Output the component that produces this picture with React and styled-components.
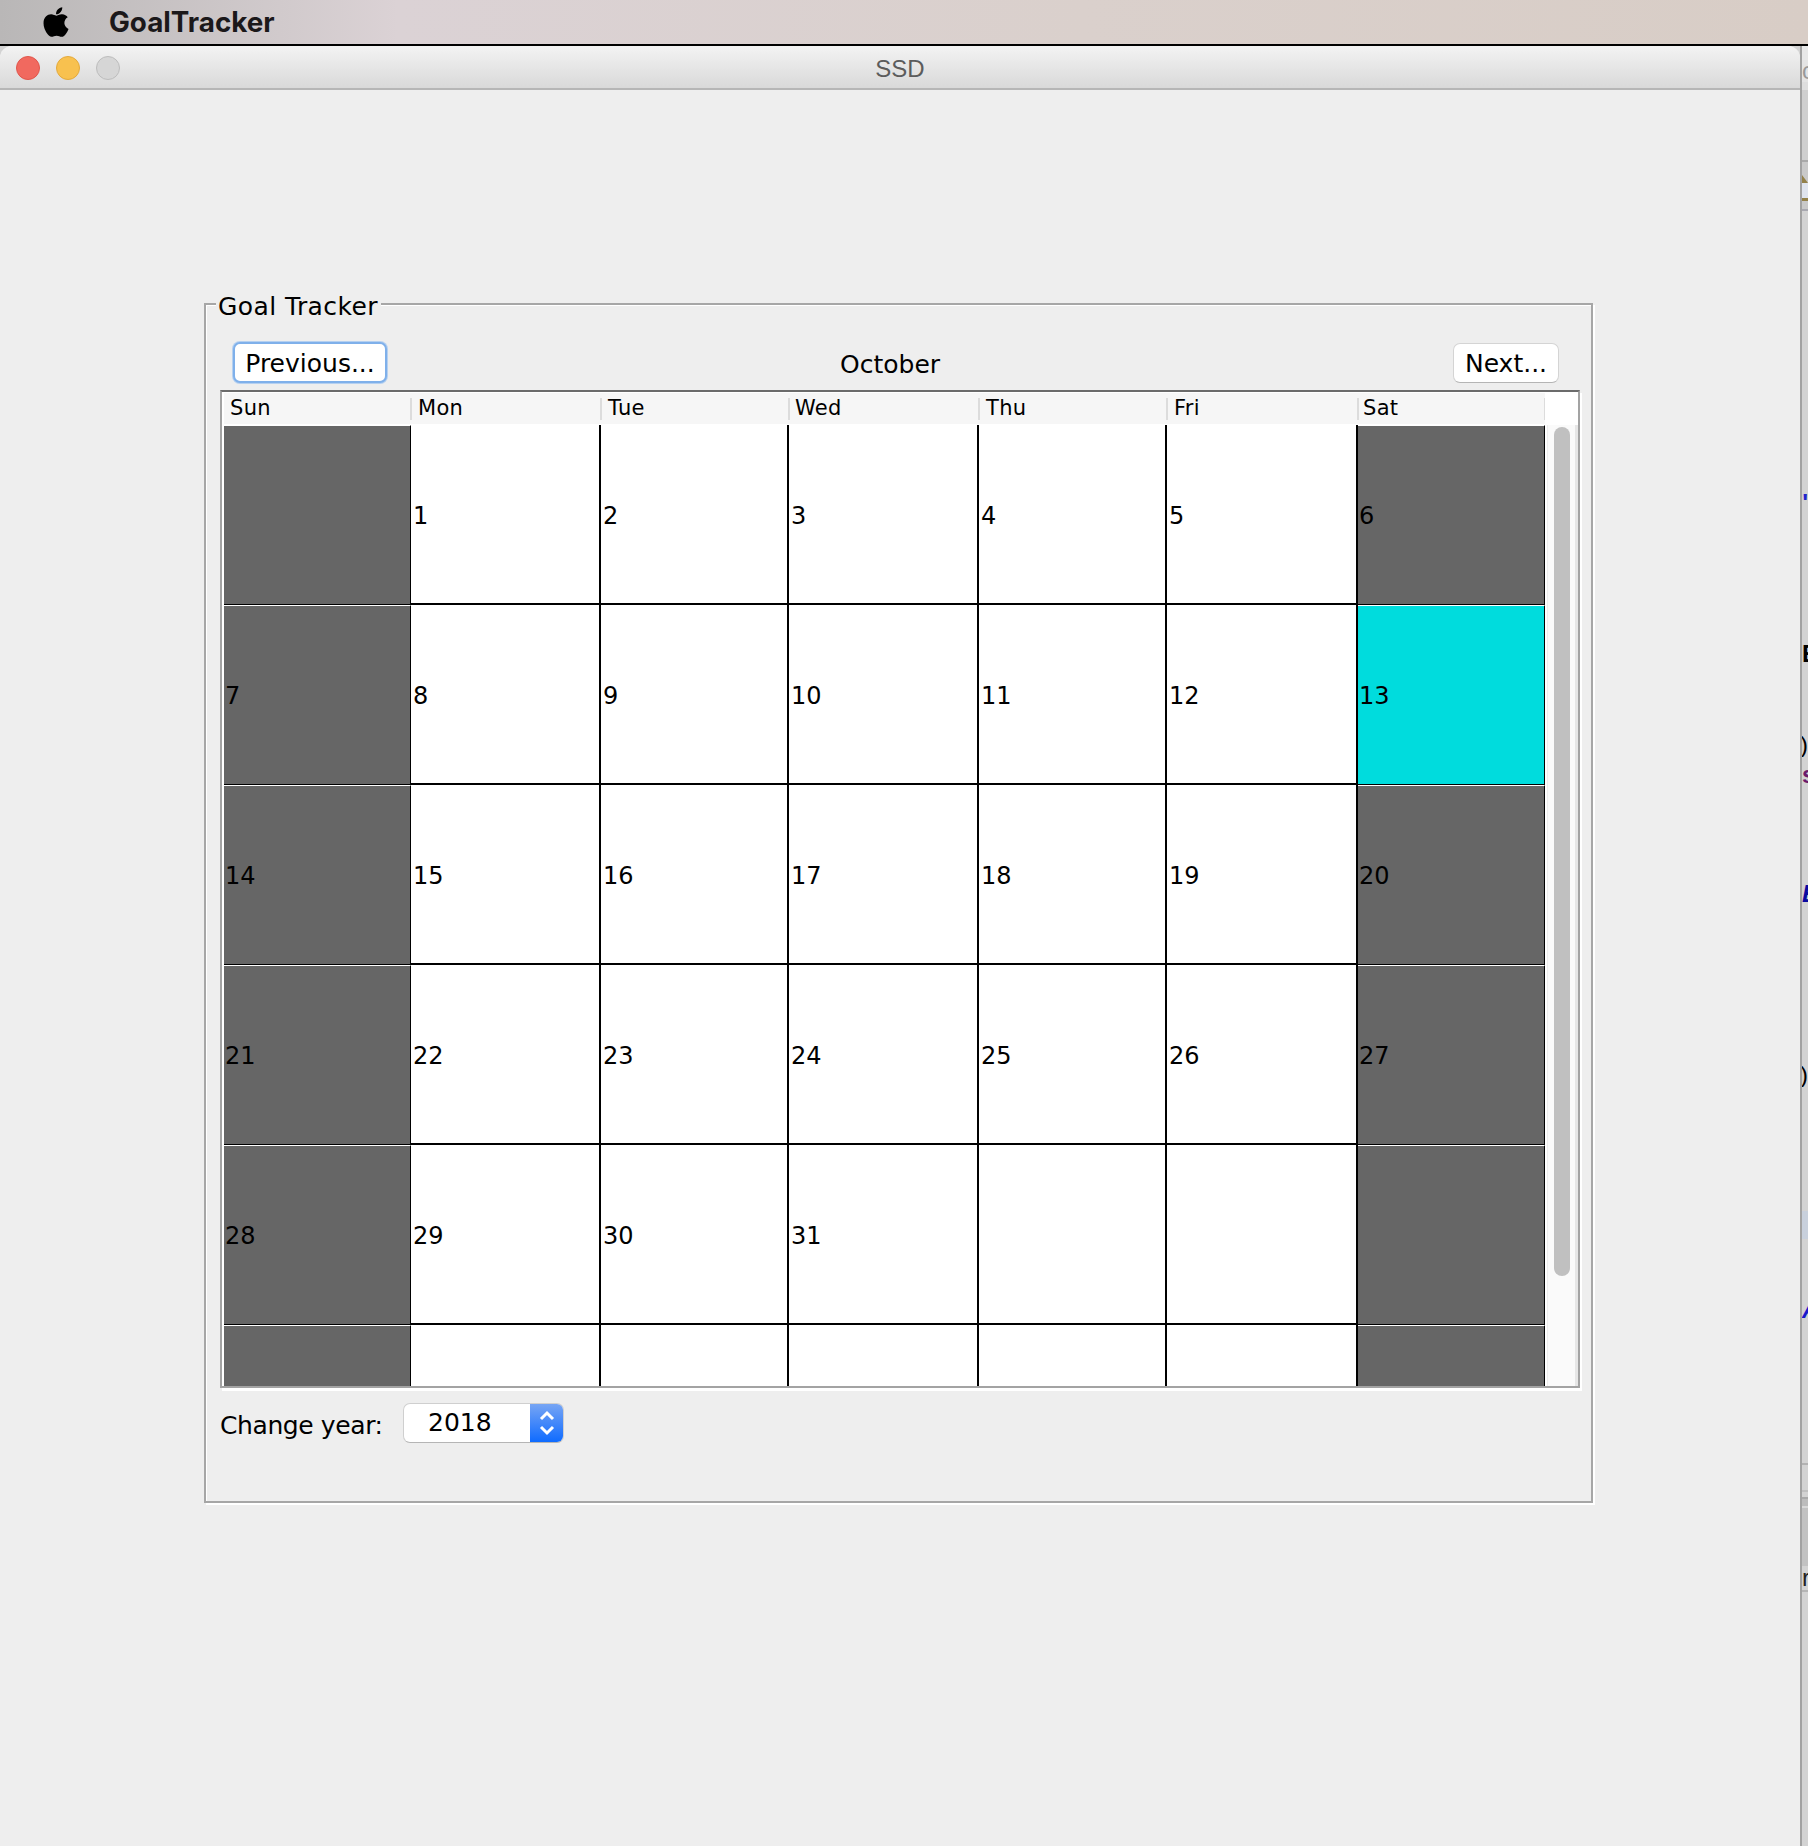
import React from 'react'
import styled, { createGlobalStyle } from 'styled-components'
import { FaApple } from 'react-icons/fa'

const GlobalStyle = createGlobalStyle`
  html, body {
    margin: 0;
    padding: 0;
    background: #eeeeee;
  }
`;

const uiFont = `'DejaVu Sans', 'Noto Sans', sans-serif`;

const Page = styled.div`
  width: 1808px;
  height: 1846px;
  overflow: hidden;
  display: flex;
  flex-direction: column;
`;

const MenuBar = styled.div`
  height: 44px;
  flex: none;
  display: flex;
  align-items: center;
  padding-left: 40px;
  background: linear-gradient(90deg, #b9b7b7 0%, #dbd2d5 22%, #dad0cc 60%, #d8cdc6 100%);
  color: #1b181a;
`;

const AppleIcon = styled(FaApple)`
  width: 32px;
  height: 34px;
  color: #000;
`;

const AppName = styled.div`
  margin-left: 37px;
  font-family: Inter, sans-serif;
  font-weight: 700;
  font-size: 27.8px;
`;

const Desk = styled.div`
  flex: 1;
  display: flex;
  padding-top: 2px;
  background: linear-gradient(#000 2px, #d3d3d3 2px);
`;

const Window = styled.div`
  width: 1800px;
  flex: none;
  background: #eeeeee;
  border-radius: 12px 12px 0 0;
  overflow: hidden;
`;

const TitleBar = styled.div`
  height: 40px;
  box-sizing: content-box;
  padding: 2px 0 0 16px;
  border-bottom: 2px solid #b6b6b6;
  background: linear-gradient(#f3f3f3, #d9d9d9);
  display: flex;
  align-items: center;
  position: relative;
`;

const Light = styled.div`
  width: 24px;
  height: 24px;
  margin-right: 16px;
  border-radius: 50%;
  box-sizing: border-box;
  border: 1px solid ${p => p.$edge};
  background: ${p => p.$color};
`;

const Title = styled.div`
  position: absolute;
  left: 0;
  right: 0;
  margin-top: 2px;
  text-align: center;
  font-family: 'Liberation Sans', sans-serif;
  font-size: 24px;
  color: #5c5c5c;
`;

const Content = styled.div`
  padding: 213px 0 0 204px;
`;

const GroupBox = styled.div`
  position: relative;
  width: 1389px;
  box-sizing: border-box;
  border: 2px solid #a6a6a6;
  box-shadow: 2px 2px 0 #fff, inset 1px 1px 0 #fff;
  padding: 37px 11px 58px 14px;
  font-family: ${uiFont};
  color: #000;
`;

const Legend = styled.div`
  position: absolute;
  left: 10px;
  top: -13px;
  padding: 0 3px 0 2px;
  background: #eeeeee;
  font-size: 25px;
  letter-spacing: 0.4px;
  line-height: 30px;
`;

const Toolbar = styled.div`
  display: flex;
  align-items: center;
  height: 41px;
  padding: 0 21px 0 13px;
  margin-bottom: 7px;
`;

const Button = styled.div`
  box-sizing: border-box;
  height: ${p => (p.$focused ? '41px' : '40px')};
  padding-top: 2px;
  background: #fff;
  border-radius: 7px;
  font-size: 25px;
  display: flex;
  align-items: center;
  justify-content: center;
  ${p => (p.$focused
    ? 'width: 154px; border: 2px solid #7fb0ea; box-shadow: 0 0 0 1px #b5d0f0;'
    : 'width: 106px; margin-left: auto; border: 1px solid #d4d4d4; border-bottom-color: #b5b5b5;')}
`;

const MonthLabel = styled.div`
  margin-left: 453px;
  font-size: 25px;
  position: relative;
  top: 2px;
`;

const ScrollPane = styled.div`
  box-sizing: border-box;
  height: 998px;
  width: 1360px;
  border: 2px solid #a3a3a3;
  border-top-color: #6b6b6b;
  box-shadow: 2px 3px 0 #fff;
  background: #fff;
  padding: 1px 0 0 2px;
  display: flex;
`;

const Viewport = styled.div`
  width: 1321px;
  height: 100%;
  overflow: hidden;
  flex: none;
`;

const columns = '187px 190px 188px 190px 188px 191px 187px';

const HeaderRow = styled.div`
  display: grid;
  grid-template-columns: ${columns};
  height: 31px;
  margin-bottom: 1px;
  background: #f6f6f6;
`;

const HeaderCell = styled.div`
  position: relative;
  padding-left: ${p => p.$pad}px;
  font-size: 21px;
  letter-spacing: 0.3px;
  line-height: 31px;
  &::after {
    content: '';
    position: absolute;
    right: -1px;
    top: 5px;
    bottom: 4px;
    width: 2px;
    background: #dcdcdc;
  }
`;

const Body = styled.div`
  display: grid;
  grid-template-columns: ${columns};
  grid-auto-rows: 180px;
`;

const cellBackgrounds = { plain: '#fff', weekend: '#666666', today: '#00dcdd' };

const Cell = styled.div`
  box-sizing: border-box;
  display: flex;
  align-items: center;
  padding-left: ${p => (p.$kind === 'plain' ? '2px' : '1px')};
  padding-top: ${p => (p.$kind === 'plain' ? '4px' : '2px')};
  background: ${p => cellBackgrounds[p.$kind]};
  border-right: ${p => (p.$kind === 'plain' ? '2px' : '1px')} solid #000;
  border-bottom: ${p => (p.$kind === 'plain' ? '2px' : '1px')} solid #000;
  border-top: ${p => (p.$kind === 'plain' ? '0' : '1px solid #fff')};
  font-size: 24px;
  color: #000;
`;

const ScrollColumn = styled.div`
  flex: 1;
  padding: 32px 0 0 2px;
  display: flex;
`;

const Track = styled.div`
  flex: 1;
  background: #fafafa;
  border-left: 1px solid #eeeeee;
  border-right: 3px solid #e6e6e6;
  padding: 2px 0 0 6px;
`;

const Thumb = styled.div`
  width: 16px;
  height: 849px;
  border-radius: 8px;
  background: #c0c0c0;
`;

const Footer = styled.div`
  display: flex;
  align-items: center;
  margin-top: 15px;
  height: 40px;
`;

const FieldLabel = styled.div`
  font-size: 25px;
  letter-spacing: -0.4px;
  width: 183px;
  position: relative;
  top: 2px;
`;

const YearSelect = styled.div`
  width: 161px;
  height: 40px;
  box-sizing: border-box;
  display: flex;
  background: #fff;
  border-radius: 7px;
  border: 1px solid #cfcfcf;
  border-bottom-color: #b5b5b5;
  overflow: hidden;
`;

const YearValue = styled.div`
  flex: 1;
  font-size: 25px;
  line-height: 38px;
  padding-left: 24px;
`;

const Stepper = styled.div`
  width: 33px;
  background: linear-gradient(#77a5f4, #0f6bff);
  display: flex;
  align-items: center;
  justify-content: center;
`;

const BackWindow = styled.div`
  flex: 1;
  display: flex;
  flex-direction: column;
  overflow: hidden;
  border-left: 2px solid #a2a2a2;
`;

const BackLine = styled.div`
  flex: none;
  height: ${p => p.$h}px;
  background: ${p => p.$bg || 'transparent'};
  color: ${p => p.$color || '#000'};
  font-family: 'Liberation Sans', sans-serif;
  font-style: ${p => (p.$italic ? 'italic' : 'normal')};
  font-weight: ${p => (p.$bold ? 700 : 400)};
  font-size: 24px;
  line-height: ${p => p.$h}px;
  white-space: nowrap;
  overflow: hidden;
  text-indent: ${p => p.$indent || 0}px;
`;

const FolderIcon = styled.svg`
  display: block;
`;

const days = ['Sun', 'Mon', 'Tue', 'Wed', 'Thu', 'Fri', 'Sat'];
const headerPads = [6, 7, 7, 6, 7, 7, 5];

const dates = [
  '', 1, 2, 3, 4, 5, 6,
  7, 8, 9, 10, 11, 12, 13,
  14, 15, 16, 17, 18, 19, 20,
  21, 22, 23, 24, 25, 26, 27,
  28, 29, 30, 31, '', '', '',
  '', '', '', '', '', '', '',
];

// what shows of the window behind, top to bottom
const backLines = [
  { h: 14, bg: '#e8e8e8' },
  { h: 22, bg: '#e4e4e4', text: 'c', color: '#999' },
  { h: 8, bg: '#dedede' },
  { h: 70, bg: '#cfcfcf' },
  { h: 2, bg: '#a9a9a9' },
  { h: 13, bg: '#c9c9c9' },
  { h: 26, bg: '#c9c9c9', icon: true },
  { h: 8, bg: '#c9c9c9' },
  { h: 2, bg: '#a8a8b0' },
  { h: 280 },
  { h: 24, text: '"', color: '#2222cc', bold: true },
  { h: 127 },
  { h: 24, text: 'E', bold: true },
  { h: 67 },
  { h: 24, text: ')', indent: -2 },
  { h: 6 },
  { h: 24, text: 's', color: '#6b1a6b', bold: true },
  { h: 95 },
  { h: 24, text: 'E', color: '#0a0aa0', bold: true, italic: true },
  { h: 157 },
  { h: 24, text: ')', indent: -2 },
  { h: 124 },
  { h: 28, bg: '#c8d0dc' },
  { h: 59 },
  { h: 24, text: 'A', color: '#1a1acc', bold: true, italic: true },
  { h: 141 },
  { h: 2, bg: '#b2b2b2' },
  { h: 25 },
  { h: 2, bg: '#c0c0c0' },
  { h: 5 },
  { h: 2, bg: '#a9a9a9' },
  { h: 7, bg: '#bcbcbc' },
  { h: 2, bg: '#d8d8d8' },
  { h: 58, bg: '#c2c2c2' },
  { h: 24, text: 'r', color: '#222' },
  { h: 2, bg: '#b5b5b5' },
];

const cellKind = (value, index) => {
  if (value === 13) return 'today';
  return index % 7 === 0 || index % 7 === 6 ? 'weekend' : 'plain';
};

const App = () => (
  <Page>
    <GlobalStyle />
    <MenuBar>
      <AppleIcon />
      <AppName>GoalTracker</AppName>
    </MenuBar>
    <Desk>
      <Window>
        <TitleBar>
          <Light $color="#f1695f" $edge="#e0564c" />
          <Light $color="#f8c14f" $edge="#e3a93c" />
          <Light $color="#d6d6d6" $edge="#bcbcbc" />
          <Title>SSD</Title>
        </TitleBar>
        <Content>
          <GroupBox>
            <Legend>Goal Tracker</Legend>
            <Toolbar>
              <Button $focused>Previous...</Button>
              <MonthLabel>October</MonthLabel>
              <Button>Next...</Button>
            </Toolbar>
            <ScrollPane>
              <Viewport>
                <HeaderRow>
                  {days.map((day, index) => (
                    <HeaderCell key={day} $pad={headerPads[index]}>{day}</HeaderCell>
                  ))}
                </HeaderRow>
                <Body>
                  {dates.map((value, index) => (
                    <Cell key={index} $kind={cellKind(value, index)}>{value}</Cell>
                  ))}
                </Body>
              </Viewport>
              <ScrollColumn>
                <Track>
                  <Thumb />
                </Track>
              </ScrollColumn>
            </ScrollPane>
            <Footer>
              <FieldLabel>Change year:</FieldLabel>
              <YearSelect>
                <YearValue>2018</YearValue>
                <Stepper>
                  <svg width="18" height="28" viewBox="0 0 18 28" fill="none" stroke="#fff" strokeWidth="3">
                    <path d="M3 10 L9 4 L15 10" />
                    <path d="M3 18 L9 24 L15 18" />
                  </svg>
                </Stepper>
              </YearSelect>
            </Footer>
          </GroupBox>
        </Content>
      </Window>
      <BackWindow>
        {backLines.map((line, index) => (
          <BackLine
            key={index}
            $h={line.h}
            $bg={line.bg}
            $color={line.color}
            $bold={line.bold}
            $italic={line.italic}
            $indent={line.indent}
          >
            {line.icon ? (
              <FolderIcon width="6" height="26" viewBox="0 0 6 26">
                <path d="M0 0 L6 8 V26 H0 Z" fill="#93814a" />
                <path d="M0 8 H6 V23 H0 Z" fill="#dfe4ee" />
              </FolderIcon>
            ) : line.text}
          </BackLine>
        ))}
      </BackWindow>
    </Desk>
  </Page>
);

export default App
